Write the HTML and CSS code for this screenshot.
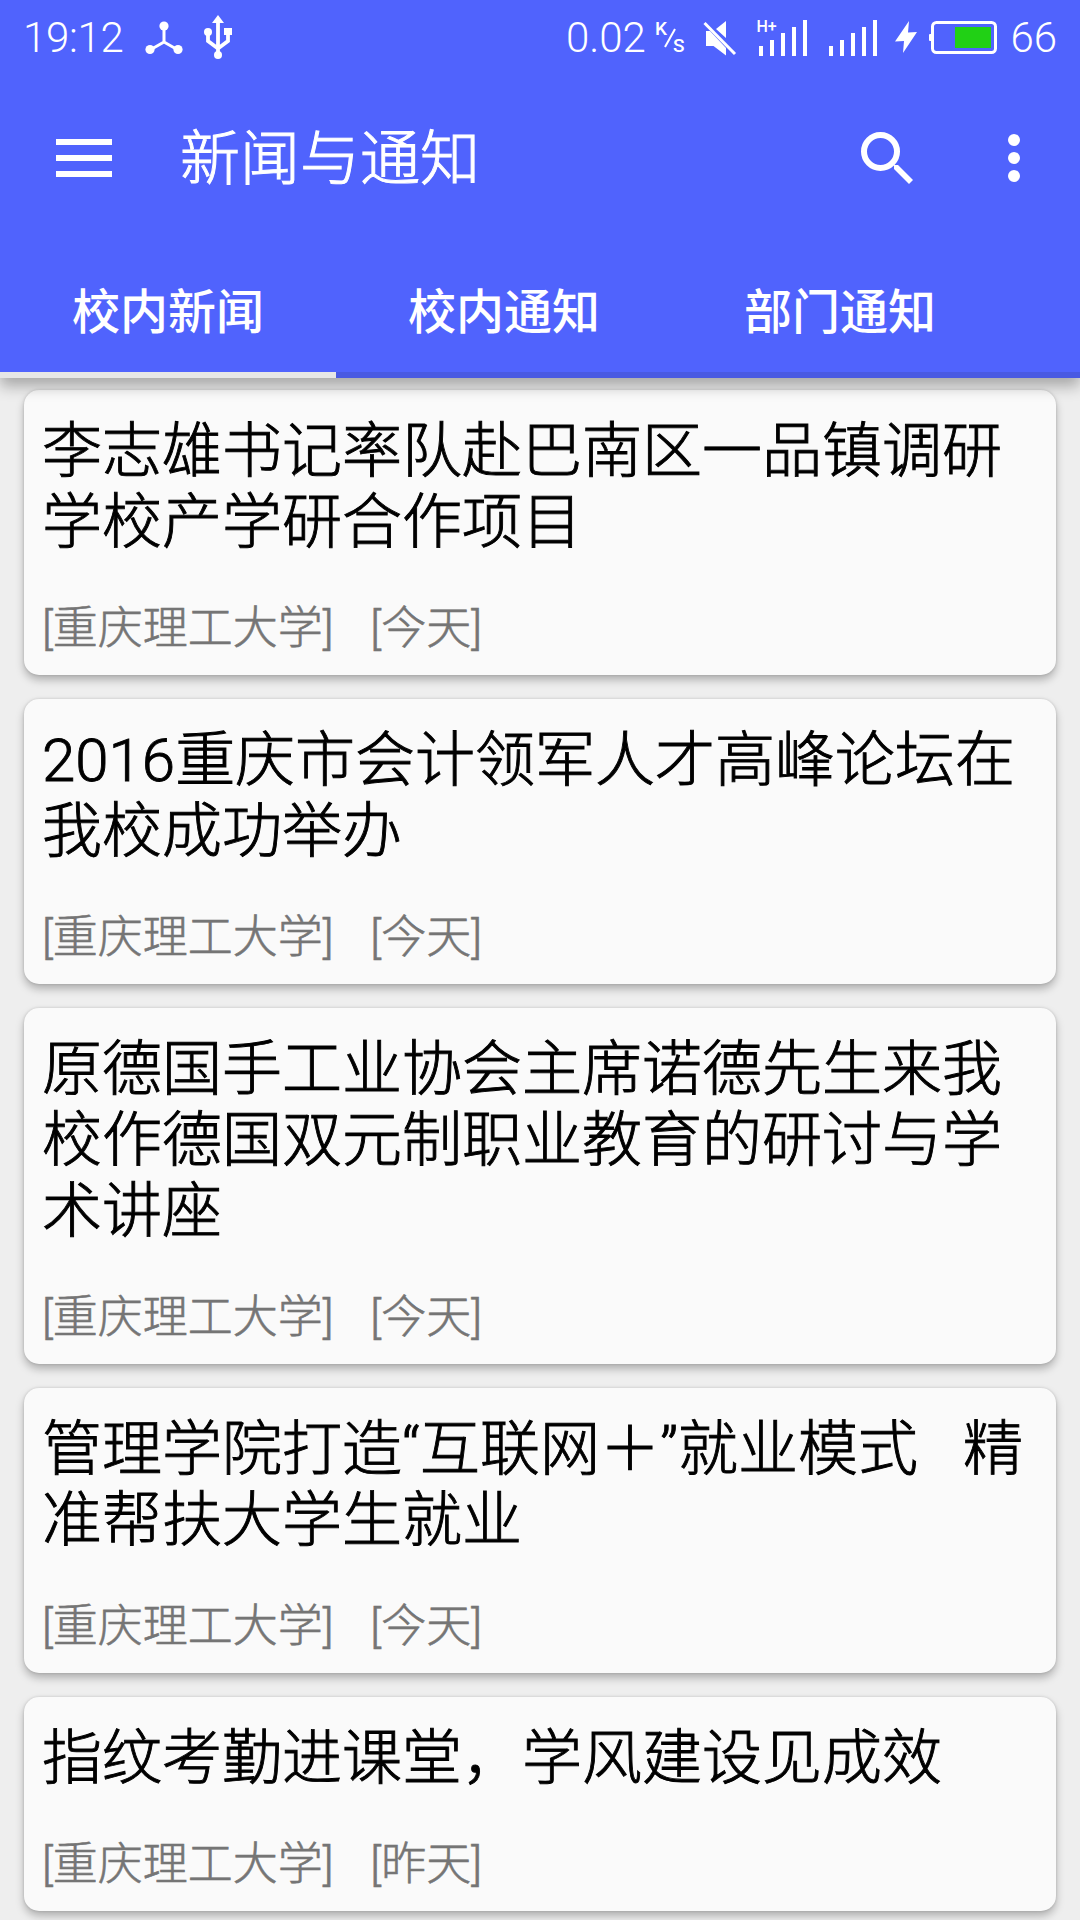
FILE: index.html
```html
<!DOCTYPE html>
<html lang="zh-CN">
<head>
    <meta charset="UTF-8">
    <meta name="viewport" content="width=device-width, initial-scale=1.0">
    <title>新闻与通知</title>
    <link rel="stylesheet" href="styles.css">
</head>
<body>
    <header class="header">
        <div class="status-bar">
            <span class="time">19:12</span>
            <svg class="icon-hub" width="38" height="34" viewBox="0 0 38 34">
                <path d="M19 5v16M19 21L5 29M19 21l14 8" stroke="#fff" stroke-width="3" fill="none"/>
                <circle cx="19" cy="5" r="4.6" fill="#fff"/>
                <circle cx="5" cy="28.5" r="4.6" fill="#fff"/>
                <circle cx="33" cy="28.5" r="4.6" fill="#fff"/>
            </svg>
            <svg class="icon-usb" width="28" height="44" viewBox="0 0 28 44">
                <path d="M14 6v34M4 17v9l10 7.500M24 17v9l-10 7.500" stroke="#fff" stroke-width="3.800" fill="none"/>
                <path d="M14 0l6 8H8z" fill="#fff"/>
                <circle cx="4" cy="17" r="4" fill="#fff"/>
                <rect x="20" y="13" width="8" height="7" fill="#fff"/>
                <circle cx="14" cy="40" r="4" fill="#fff"/>
            </svg>
            <div class="status-right">
                <span class="speed">0.02</span>
                <span class="unit"><sup>K</sup><svg width="12" height="20" viewBox="0 0 12 20"><path d="M11 1L1 19" stroke="#fff" stroke-width="2"/></svg><sub>S</sub></span>
                <svg class="icon-mute" width="34" height="36" viewBox="0 0 34 36">
                    <path d="M3 11h4l16 17v7.500L10.500 26H3zM23 1v17L13 9z" fill="#fff"/>
                    <path d="M1.500 3L32 34" stroke="#fff" stroke-width="3"/>
                </svg>
                <div class="signal">
                    <span class="network">H+</span>
                    <svg width="50" height="36" viewBox="0 0 50 36">
                        <path d="M2 26v10M13 20v16M24 13v23M35 7v29M46 0v36" stroke="#fff" stroke-width="4"/>
                    </svg>
                </div>
                <svg class="signal-2" width="50" height="36" viewBox="0 0 50 36">
                    <path d="M2 26v10M13 20v16M24 13v23M35 7v29M46 0v36" stroke="#fff" stroke-width="4"/>
                </svg>
                <svg class="icon-bolt" width="22" height="32" viewBox="0 0 22 32">
                    <path d="M14 0L0 20.500l9-.5-1 12L22 11l-9 .5z" fill="#fff"/>
                </svg>
                <svg class="icon-battery" width="68" height="33" viewBox="0 0 68 33">
                    <rect x="3.500" y="1.500" width="63" height="30" rx="4" stroke="#fff" stroke-width="3" fill="none"/>
                    <rect x="0" y="13" width="3" height="7" rx="1" fill="#fff"/>
                    <rect x="26" y="6" width="36" height="21" fill="#21d015"/>
                </svg>
                <span class="percent">66</span>
            </div>
        </div>
        <div class="toolbar">
            <svg class="icon-menu" width="56" height="38" viewBox="0 0 56 38">
                <path d="M0 3h56M0 19h56M0 35h56" stroke="#fff" stroke-width="6"/>
            </svg>
            <h1>新闻与通知</h1>
            <svg class="icon-search" width="52" height="52" viewBox="0 0 52 52">
                <circle cx="19.500" cy="19.500" r="16.500" stroke="#fff" stroke-width="6" fill="none"/>
                <path d="M33 33h4l15 15-4 4-15-15z" fill="#fff"/>
            </svg>
            <svg class="icon-more" width="12" height="48" viewBox="0 0 12 48">
                <circle cx="6" cy="6" r="6" fill="#fff"/>
                <circle cx="6" cy="24" r="6" fill="#fff"/>
                <circle cx="6" cy="42" r="6" fill="#fff"/>
            </svg>
        </div>
        <nav class="tabs">
            <div class="tab active">校内新闻</div>
            <div class="tab">校内通知</div>
            <div class="tab">部门通知</div>
        </nav>
    </header>

    <main class="news-list">
        <div class="card">
            <h2 class="card-title">李志雄书记率队赴巴南区一品镇调研学校产学研合作项目</h2>
            <p class="card-meta">[重庆理工大学]   [今天]</p>
        </div>
        <div class="card">
            <h2 class="card-title">2016重庆市会计领军人才高峰论坛在我校成功举办</h2>
            <p class="card-meta">[重庆理工大学]   [今天]</p>
        </div>
        <div class="card">
            <h2 class="card-title">原德国手工业协会主席诺德先生来我校作德国双元制职业教育的研讨与学术讲座</h2>
            <p class="card-meta">[重庆理工大学]   [今天]</p>
        </div>
        <div class="card">
            <h2 class="card-title">管理学院打造“互联网＋”就业模式   精准帮扶大学生就业</h2>
            <p class="card-meta">[重庆理工大学]   [今天]</p>
        </div>
        <div class="card">
            <h2 class="card-title">指纹考勤进课堂，学风建设见成效</h2>
            <p class="card-meta">[重庆理工大学]   [昨天]</p>
        </div>
    </main>
</body>
</html>
```
FILE: styles.css
```css
* {
    box-sizing: border-box;
}

body {
    font-family: Roboto, "Noto Sans CJK SC", sans-serif;
    margin: 0;
    height: 1920px;
    overflow: hidden;
    background-color: #eee;
}

svg {
    display: block;
    flex-shrink: 0;
}

.header {
    position: relative;
    z-index: 1;
    height: 378px;
    background-color: #5063fd;
    color: #fff;
    box-shadow: 0 8px 14px rgba(0, 0, 0, 0.3);
}

.status-bar {
    display: flex;
    align-items: flex-start;
    height: 72px;
    padding: 0 23px;
    font-size: 42px;
    font-weight: 300;
    line-height: 75px;
}

.time {
    letter-spacing: -0.3px;
}

.icon-hub {
    margin: 21px 0 0 21px;
}

.icon-usb {
    margin: 15px 0 0 21px;
}

.status-right {
    display: flex;
    align-items: flex-start;
    margin-left: auto;
}

.unit {
    display: flex;
    margin: 20px 0 0 9px;
    font-size: 19px;
    font-weight: 500;
    line-height: 18px;
}

.unit sup, .unit sub {
    font-size: 19px;
    line-height: 18px;
    vertical-align: baseline;
}

.unit svg {
    margin: 8px -3px 0 -3px;
}

.unit sub {
    margin-top: 17px;
}

.icon-mute {
    margin: 20px 0 0 19px;
}

.signal {
    position: relative;
    margin: 20px 0 0 22px;
}

.network {
    position: absolute;
    top: -1px;
    left: -3px;
    font-size: 16px;
    font-weight: 500;
    line-height: 16px;
}

.signal-2 {
    margin: 20px 0 0 20px;
}

.icon-bolt {
    margin: 21px 0 0 16px;
}

.icon-battery {
    margin: 21px 0 0 12px;
}

.percent {
    margin-left: 13px;
}

.toolbar {
    display: flex;
    align-items: center;
    height: 168px;
    padding: 4px 60px 0 56px;
}

.toolbar h1 {
    flex: 1;
    margin: 4px 0 0 68px;
    font-size: 60px;
    font-weight: 300;
    line-height: 72px;
    -webkit-text-stroke: 1px #fff;
}

.icon-more {
    margin-left: 95px;
}

.tabs {
    display: flex;
    height: 138px;
    box-shadow: inset 0 -6px #4959e2;
}

.tab {
    width: 336px;
    font-size: 48px;
    font-weight: 500;
    line-height: 145px;
    text-align: center;
}

.tab.active {
    box-shadow: inset 0 -6px #e6e6e6;
}

.news-list {
    display: flex;
    flex-direction: column;
    gap: 24px;
    padding: 12px 24px;
}

.card {
    padding: 26px 18px 20px;
    border-radius: 15px;
    background-color: #fafafa;
    box-shadow: 0 5px 8px rgba(0, 0, 0, 0.26), 0 0 3px rgba(0, 0, 0, 0.15);
}

.card-title {
    margin: 0;
    font-size: 60px;
    font-weight: 300;
    line-height: 71px;
    color: #000;
    white-space: pre-wrap;
    word-spacing: 0.4px;
    -webkit-text-stroke: 0.9px #000;
}

.card-meta {
    margin: 44px 0 0;
    font-size: 45px;
    font-weight: 300;
    line-height: 53px;
    color: #757575;
    white-space: pre;
    word-spacing: 1.3px;
    -webkit-text-stroke: 0.6px #757575;
}
```
